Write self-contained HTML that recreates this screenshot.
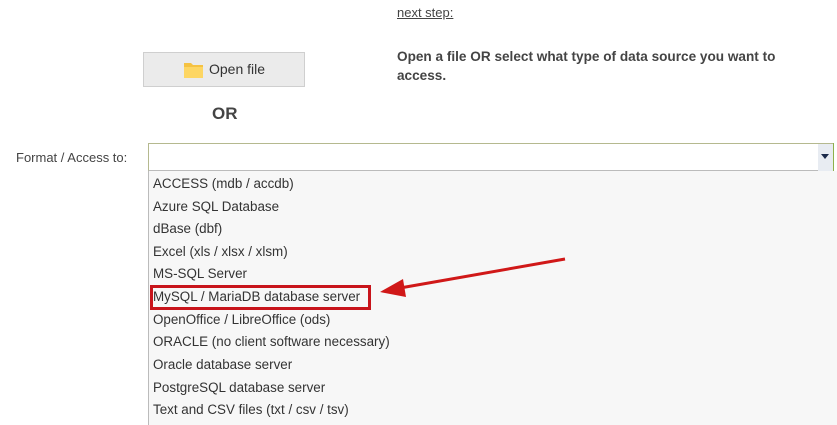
<!DOCTYPE html>
<html><head><meta charset="utf-8"><style>
html,body{margin:0;padding:0;width:837px;height:425px;overflow:hidden;background:#fff;font-family:"Liberation Sans",sans-serif;color:#333;}
.abs{position:absolute;}
.item{position:absolute;left:153px;font-size:13.4px;color:#333;white-space:nowrap;}
</style></head><body>
<div class="abs" style="left:397px;top:5px;font-size:13px;text-decoration:underline;color:#444;">next step:</div>
<div class="abs" style="left:397px;top:47px;font-size:13.6px;font-weight:bold;line-height:19px;color:#444;width:430px;">Open a file OR select what type of data source you want to<br>access.</div>
<div class="abs" style="left:143px;top:52px;width:162px;height:35px;background:#ebebeb;border:1px solid #cfcfcf;box-sizing:border-box;"></div>
<svg class="abs" style="left:183px;top:61px" width="21" height="18" viewBox="0 0 21 18"><path d="M1 2h7l2 2h10v13H1z" fill="#f5c242"/><path d="M1 6h19v11H1z" fill="#fdd663"/></svg>
<div class="abs" style="left:209px;top:61px;font-size:14px;color:#333;">Open file</div>
<div class="abs" style="left:212px;top:104px;font-size:17px;font-weight:bold;color:#444;">OR</div>
<div class="abs" style="left:16px;top:150px;font-size:13px;color:#444;">Format / Access to:</div>
<div class="abs" style="left:148px;top:143px;width:685px;height:28px;border:1px solid #b5b98f;border-bottom-color:#bbb;border-right:none;box-sizing:border-box;background:#fff;"></div>
<div class="abs" style="left:818px;top:144px;width:15px;height:27px;background:#e8ecf2;"></div>
<div class="abs" style="left:833px;top:143px;width:1px;height:28px;background:#8db04b;"></div>
<svg class="abs" style="left:821px;top:154px" width="8" height="5"><path d="M0 0h8L4 5z" fill="#1b2a4a"/></svg>
<div class="abs" style="left:148px;top:171px;width:689px;height:254px;background:#f7f7f7;border-left:1px solid #bbb;box-sizing:border-box;"></div>
<div class="item" style="top:176px">ACCESS (mdb / accdb)</div>
<div class="item" style="top:199px">Azure SQL Database</div>
<div class="item" style="top:221px">dBase (dbf)</div>
<div class="item" style="top:244px">Excel (xls / xlsx / xlsm)</div>
<div class="item" style="top:266px">MS-SQL Server</div>
<div class="item" style="top:289px">MySQL / MariaDB database server</div>
<div class="item" style="top:312px">OpenOffice / LibreOffice (ods)</div>
<div class="item" style="top:334px">ORACLE (no client software necessary)</div>
<div class="item" style="top:357px">Oracle database server</div>
<div class="item" style="top:380px">PostgreSQL database server</div>
<div class="item" style="top:402px">Text and CSV files (txt / csv / tsv)</div>
<div class="abs" style="left:150px;top:285px;width:221px;height:25px;border:3px solid #c8141b;box-sizing:border-box;"></div>
<svg class="abs" style="left:0;top:0" width="837" height="425"><line x1="565" y1="259" x2="400" y2="288" stroke="#d01818" stroke-width="3"/><path d="M380 292L403 279L406 297Z" fill="#d01818"/></svg>
</body></html>
